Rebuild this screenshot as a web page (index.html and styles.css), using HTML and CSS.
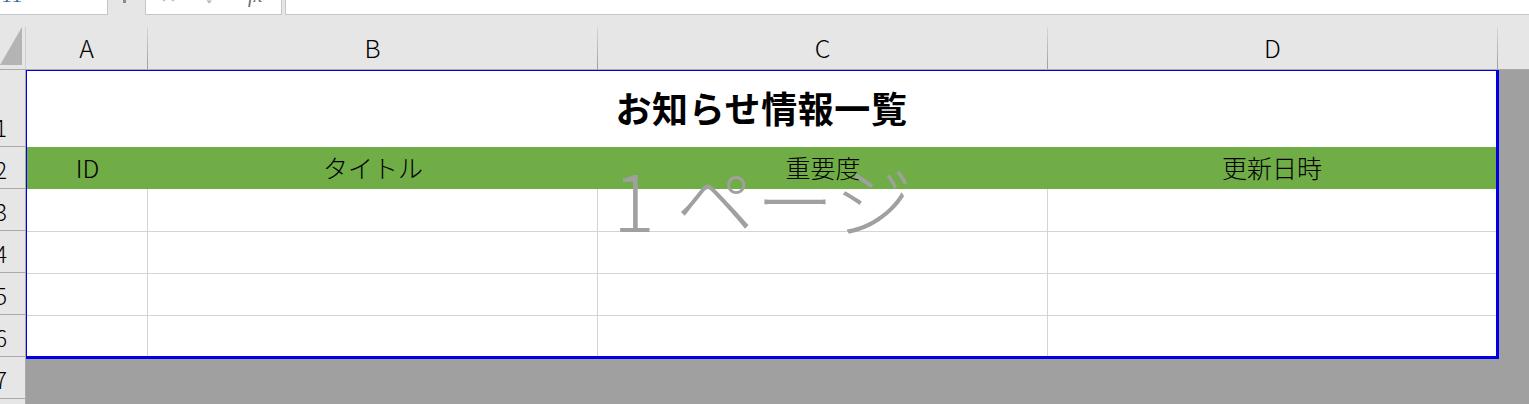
FILE: index.html
```html
<!DOCTYPE html>
<html lang="ja">
<head>
<meta charset="utf-8">
<title>お知らせ情報一覧</title>
<link rel="stylesheet" href="styles.css">
</head>
<body>
<div class="toolbar">
  <div class="namebox"><span class="nb-text">11</span></div>
  <div class="grip"><span class="dot"></span></div>
  <div class="fbtns">
    <span class="fb fb-x">✕</span>
    <span class="fb fb-ok">✓</span>
    <span class="fb fb-fx">fx</span>
  </div>
  <div class="fbar"></div>
</div>

<div class="colhdr">
  <div class="corner">
    <svg width="22" height="38" viewBox="0 0 22 38"><polygon points="0,38 22,0 22,38" fill="#b4b4b4"/></svg>
  </div>
  <div class="ch ch-a">A</div>
  <div class="ch ch-b">B</div>
  <div class="ch ch-c">C</div>
  <div class="ch ch-d">D</div>
  <div class="ch-rest"></div>
</div>

<div class="main">
  <div class="rowhdr">
    <div class="rh rh1"><span>1</span></div>
    <div class="rh"><span>2</span></div>
    <div class="rh"><span>3</span></div>
    <div class="rh"><span>4</span></div>
    <div class="rh"><span>5</span></div>
    <div class="rh"><span>6</span></div>
    <div class="rh"><span>7</span></div>
    <div class="rh"><span>8</span></div>
  </div>
  <div class="sheetarea">
    <div class="print">
      <div class="title">お知らせ情報一覧</div>
      <div class="hd">ID</div>
      <div class="hd">タイトル</div>
      <div class="hd">重要度</div>
      <div class="hd">更新日時</div>

      <div class="c r3"></div><div class="c r3"></div><div class="c r3"></div><div class="c r3 last"></div>
      <div class="c r4"></div><div class="c r4"></div><div class="c r4"></div><div class="c r4 last"></div>
      <div class="c r5"></div><div class="c r5"></div><div class="c r5"></div><div class="c r5 last"></div>
      <div class="c r6"></div><div class="c r6"></div><div class="c r6"></div><div class="c r6 last"></div>
    </div>
    <div class="pagemark">1 ページ</div>
  </div>
</div>
</body>
</html>
```

FILE: styles.css
```css
html, body {
  margin: 0;
  padding: 0;
}
body {
  width: 1529px;
  height: 404px;
  overflow: hidden;
  background: #e6e6e6;
  font-family: "Noto Sans CJK JP", "Noto Sans", sans-serif;
  color: #000;
}

/* ---------- formula toolbar ---------- */
.toolbar {
  display: flex;
  height: 15px;
}
.namebox {
  width: 107px;
  height: 14px;
  background: #fff;
  border-right: 1px solid #c6c6c6;
  border-bottom: 1px solid #c6c6c6;
  overflow: hidden;
}
.nb-text {
  display: block;
  margin-top: -16px;
  margin-left: 1px;
  font-family: "Liberation Serif", serif;
  font-size: 22px;
  line-height: 22px;
  color: #44679f;
}
.grip {
  width: 37px;
  display: flex;
  justify-content: center;
}
.dot {
  display: block;
  width: 3px;
  height: 3px;
  margin-left: -4px;
  background: #8a8a8a;
}
.fbtns {
  width: 135px;
  height: 14px;
  background: #fff;
  border: 1px solid #c6c6c6;
  border-top: none;
  position: relative;
  overflow: hidden;
}
.fb {
  position: absolute;
  top: -15px;
  font-size: 20px;
  line-height: 20px;
  color: #b8b8b8;
}
.fb-x { left: 14px; }
.fb-ok { left: 59px; }
.fb-fx {
  left: 102px;
  font-family: "Liberation Serif", serif;
  font-style: italic;
  color: #6a6a6a;
}
.fbar {
  flex: 1;
  margin-left: 3px;
  height: 14px;
  background: #fff;
  border-left: 1px solid #c6c6c6;
  border-bottom: 1px solid #c6c6c6;
}

/* ---------- column header ---------- */
.colhdr {
  display: flex;
  padding-top: 12px;
  height: 42px;
  border-bottom: 1px solid #ababab;
}
.corner {
  width: 26px;
  border-right: 1px solid #d0d0d0;
  display: flex;
  align-items: flex-end;
  padding-bottom: 4px;
  box-sizing: border-box;
}
.ch {
  display: flex;
  align-items: center;
  justify-content: center;
  font-size: 25px;
  font-weight: 300;
  border-right: 1px solid #a9a9a9;
  border-image: linear-gradient(to bottom, #d8d8d8, #9c9c9c) 1;
  border-top: none;
  border-left: none;
  border-bottom: none;
  line-height: 1;
  padding-bottom: 1px;
  box-sizing: border-box;
}
.ch-a { width: 122px; }
.ch-b { width: 450px; }
.ch-c { width: 450px; }
.ch-d { width: 450px; }
.ch-rest { flex: 1; }

/* ---------- main sheet ---------- */
.main {
  display: flex;
  height: 334px;
}
.rowhdr {
  width: 25px;
  border-right: 1px solid #ababab;
  display: flex;
  flex-direction: column;
  overflow: hidden;
}
.rh {
  flex: none;
  border-bottom: 1px solid #ababab;
  display: flex;
  align-items: flex-end;
  justify-content: flex-end;
  padding-right: 18px;
  padding-bottom: 7px;
  box-sizing: content-box;
  height: 34px;
}
.rh1 {
  height: 69px;
}
.rh span {
  font-size: 23px;
  line-height: 23px;
  font-weight: 300;
}

.sheetarea {
  flex: 1;
  background: #a0a0a0;
  position: relative;
}
.print {
  width: 1469px;
  background: #fff;
  border-top: 1px solid #0000e6;
  border-left: 1px solid #0000e6;
  border-right: 3px solid #0000e6;
  border-bottom: 3px solid #0000e6;
  display: grid;
  grid-template-columns: 121px 450px 450px 448px;
  grid-template-rows: 76px 42px 43px 42px 42px 40px;
}
.title {
  grid-column: 1 / -1;
  display: flex;
  align-items: center;
  justify-content: center;
  font-size: 36px;
  font-weight: 700;
  letter-spacing: 0.6px;
  padding-bottom: 5px;
}
.hd {
  background: #70ad47;
  display: flex;
  align-items: center;
  justify-content: center;
  font-size: 25px;
  font-weight: 300;
  line-height: 1;
  padding-bottom: 2px;
}
.c {
  border-right: 1px solid #d4d4d4;
  border-bottom: 1px solid #d4d4d4;
}
.c.last {
  border-right: none;
}
.c.r6 {
  border-bottom: none;
}

.pagemark {
  position: absolute;
  left: 587px;
  top: 89px;
  font-size: 78px;
  line-height: 1;
  font-weight: 300;
  color: #a0a0a0;
  white-space: pre;
  letter-spacing: 2px;
}
```
